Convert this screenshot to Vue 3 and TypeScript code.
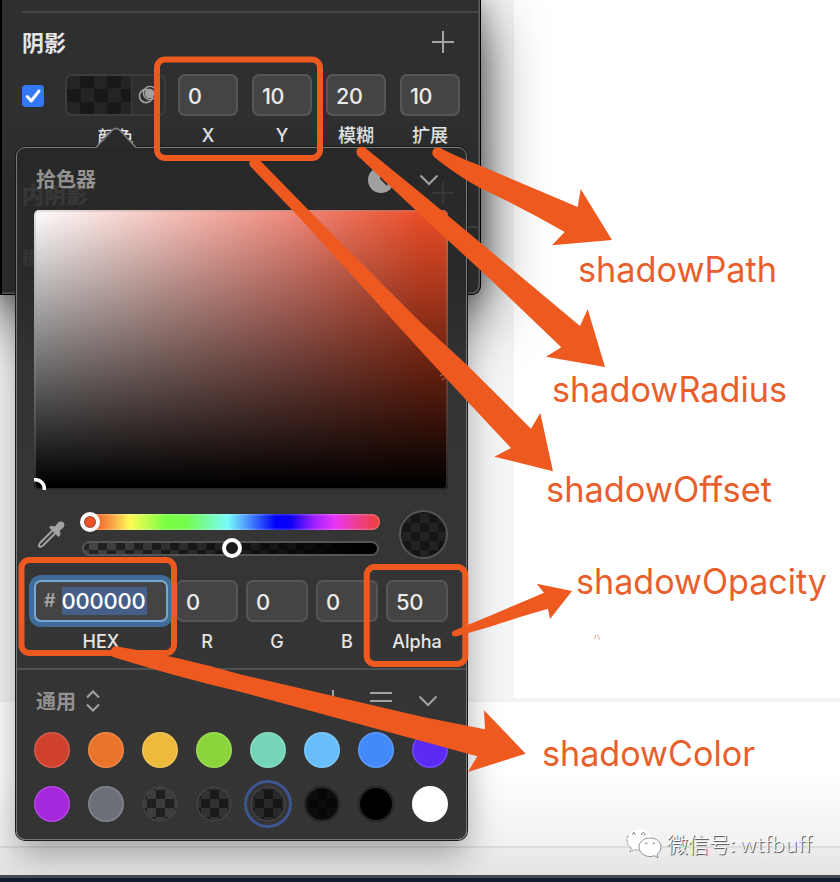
<script setup lang="ts">
interface Field { value: string; label: string }
interface Swatch { color: string; kind: 'solid' | 'checker'; selected?: boolean }
interface Note { text: string; x: number; y: number; width: number }

const shadowFields: Field[] = [
  { value: '0', label: 'X' },
  { value: '10', label: 'Y' },
  { value: '20', label: '模糊' },
  { value: '10', label: '扩展' },
]
const channels: Field[] = [
  { value: '0', label: 'R' },
  { value: '0', label: 'G' },
  { value: '0', label: 'B' },
  { value: '50', label: 'Alpha' },
]
const swatches: Swatch[] = [
  { color: '#cf412d', kind: 'solid' },
  { color: '#ea752a', kind: 'solid' },
  { color: '#edba3c', kind: 'solid' },
  { color: '#8ad53b', kind: 'solid' },
  { color: '#75d5b8', kind: 'solid' },
  { color: '#67befa', kind: 'solid' },
  { color: '#428af7', kind: 'solid' },
  { color: '#5c2bf3', kind: 'solid' },
  { color: '#a528dc', kind: 'solid' },
  { color: '#6d7079', kind: 'solid' },
  { color: 'rgba(0,0,0,.12)', kind: 'checker' },
  { color: 'rgba(0,0,0,.28)', kind: 'checker' },
  { color: 'rgba(0,0,0,.4)', kind: 'checker', selected: true },
  { color: 'rgba(0,0,0,.82)', kind: 'checker' },
  { color: '#000000', kind: 'solid' },
  { color: '#ffffff', kind: 'solid' },
]
const notes: Note[] = [
  { text: 'shadowPath', x: 578, y: 282, width: 199 },
  { text: 'shadowRadius', x: 552, y: 402, width: 235 },
  { text: 'shadowOffset', x: 546, y: 502, width: 226 },
  { text: 'shadowOpacity', x: 576, y: 594, width: 251 },
  { text: 'shadowColor', x: 542, y: 766, width: 213 },
]
const arrows: string[] = [
  'M443 149.500 Q460 158 481 166 L577.700 207 L580.700 189 L612 240 L552 245.300 L564.700 232 Q523 208 480 188 Q455 174 434 157 C429 151 436 144 443 149.500Z',
  'M366 148.500 L420 192.500 L467 231.500 L580 326 L587.700 309.300 L605 367 L546 356.700 L561.300 347.300 L490 279 Q430 224 358 156 C353 149 361 144 366 148.500Z',
  'M260.500 161 L318.300 220 L420 321.700 L467 365 L531 428.700 L540.300 413 L553 471.300 L494.300 456.700 L511 448 L467 401 L420 350 L301.700 220 L250 166 C247 160 256 155 260.500 161Z',
  'M117 646.500 Q177 656 240 674.300 L423 717 L485 729.300 L484 710.300 L525.700 753.700 L468 772 L477.300 756.300 L415 739.300 L240 691.700 Q177 677 113 657 C108 653 112 645 117 646.500Z',
  'M453 631 L490 615.700 L520 603 L544 592.700 L536.700 583.700 L572 591 L550 619 L548 608.700 L520 617 L490 626.700 L456 636.500 C451 637 451 632 453 631Z',
]
</script>

<template>
  <main class="stage">
    <div class="backdrop">
      <div class="canvas-tint"></div>
      <div class="rule"></div>
      <div class="lower"></div>
      <div class="status"></div>
      <div class="dock"></div>
    </div>

    <section class="inspector">
      <div class="hairline"></div>
      <header class="inspector-head">
        <h2>阴影</h2>
        <svg width="22" height="22" viewBox="0 0 22 22"><path d="M11 0V22M0 11H22" stroke="#a3a4a5" stroke-width="2" fill="none" /></svg>
      </header>
      <div class="shadow-row">
        <div class="check">
          <svg width="22" height="22" viewBox="0 0 22 22"><path d="M5.200 11.600 9.200 16 17 6" stroke="#fff" stroke-width="3" fill="none" stroke-linecap="round" stroke-linejoin="round" /></svg>
        </div>
        <div class="color-cell">
          <div class="color-well">
            <div class="well-checker"></div>
            <div class="blend">
              <svg width="22" height="22" viewBox="0 0 22 22"><circle cx="9" cy="12" r="6.600" fill="none" stroke="#a1a1a2" stroke-width="1.600" /><circle cx="13" cy="9" r="6.600" fill="none" stroke="#a1a1a2" stroke-width="1.400" /><circle cx="12.500" cy="9.500" r="4.800" fill="#a1a1a2" /></svg>
            </div>
          </div>
          <span>颜色</span>
        </div>
        <div class="shadow-fields">
          <label v-for="f in shadowFields" :key="f.label" class="field">
            <b>{{ f.value }}</b><span>{{ f.label }}</span>
          </label>
        </div>
      </div>
      <div class="hairline section-end"></div>
    </section>

    <section class="picker">
      <svg class="beak" width="42" height="23" viewBox="0 0 42 23"><path d="M0 22 L17.500 4 Q21 1 24.500 4 L42 22V23H0Z" fill="#2a2a2b" /><path d="M1 21.500 L17.500 4 Q21 1 24.500 4 L41 21.500" fill="none" stroke="#747576" stroke-width="1.700" /></svg>
      <div class="ghost">
        <strong>内阴影</strong>
        <svg width="22" height="22" viewBox="0 0 22 22"><path d="M11 0V22M0 11H22" stroke="#403b39" stroke-width="1.500" /></svg>
        <em>模</em>
      </div>
      <header class="picker-head">
        <h3>拾色器</h3>
        <div class="head-tools">
          <svg width="26" height="26" viewBox="0 0 26 26"><circle cx="13" cy="13" r="13" fill="#a0a0a0" /><path d="M12 7 V12 L19 19 L21 13Z" fill="#2a2a2a" /></svg>
          <svg width="20" height="12" viewBox="0 0 20 12"><path d="M1.500 1.500 10 10 18.500 1.500" stroke="#a3a3a3" stroke-width="2" fill="none" /></svg>
        </div>
      </header>
      <div class="spectrum">
        <svg width="12" height="12" viewBox="0 0 12 12"><path d="M0 1.800A9 9 0 0 1 10.200 12" stroke="#fff" stroke-width="3.600" fill="none" /></svg>
      </div>
      <div class="sliders">
        <svg width="30" height="30" viewBox="0 0 30 30"><path d="M17 10 4.500 22.500Q2.500 25 3 26Q4 28 7 25.500L19.500 13" fill="none" stroke="#a2a2a2" stroke-width="2" /><path d="M13 7.500Q15 4.500 19 6.500L22 2.500Q25 .5 27.500 2.500Q29.500 5 27.300 7.500L23.500 11Q26 14 22.500 17Z" fill="#a2a2a2" /></svg>
        <div class="tracks">
          <div class="hue"><i class="knob red"></i></div>
          <div class="alpha"><i class="knob mid"></i></div>
        </div>
        <div class="preview"></div>
      </div>
      <div class="inputs">
        <label class="field hex"><b><small>#</small><mark>000000</mark></b><span>HEX</span></label>
        <label v-for="c in channels" :key="c.label" class="field">
          <b>{{ c.value }}</b><span>{{ c.label }}</span>
        </label>
      </div>
      <div class="divider"></div>
      <div class="palette-head">
        <h3>通用</h3>
        <svg width="14" height="22" viewBox="0 0 14 22"><path d="M1 7.500 7 1.500 13 7.500M1 14.500 7 20.500 13 14.500" stroke="#a3a3a3" stroke-width="2" fill="none" /></svg>
        <div class="palette-tools">
          <svg width="22" height="22" viewBox="0 0 22 22"><path d="M11 0V22M0 11H22" stroke="#a3a3a3" stroke-width="2" /></svg>
          <svg width="22" height="22" viewBox="0 0 22 22"><path d="M0 3H22M0 11H22" stroke="#a3a3a3" stroke-width="2" /></svg>
          <svg width="20" height="12" viewBox="0 0 20 12"><path d="M1.500 1.500 10 10 18.500 1.500" stroke="#a3a3a3" stroke-width="2" fill="none" /></svg>
        </div>
      </div>
      <div class="swatches">
        <i v-for="(s, i) in swatches" :key="i" :class="['swatch', s.kind, { selected: s.selected }]" :style="{ '--tone': s.color }"></i>
      </div>
    </section>

    <svg class="annotations" width="840" height="882" viewBox="0 0 840 882">
      <g fill="none" stroke="#ee591f" stroke-width="6">
        <rect x="157" y="59.500" width="163" height="98.500" rx="8" />
        <rect x="21.500" y="560" width="152.500" height="93" rx="8" />
        <rect x="366.700" y="567" width="98.600" height="97" rx="8" />
      </g>
      <path v-for="(d, i) in arrows" :key="i" :d="d" fill="#ee591f" />
      <path d="M594.500 639 596 634.500M597.500 635 599.500 639.500M440 376 443 374M442 380 445 378" stroke="#dc8b70" stroke-width=".8" fill="none" />
      <text v-for="n in notes" :key="n.text" class="note" :x="n.x" :y="n.y" :textLength="n.width" lengthAdjust="spacingAndGlyphs">{{ n.text }}</text>
    </svg>

    <footer class="watermark">
      <svg width="36" height="32" viewBox="0 0 36 32">
        <path d="M14 1.500C6.500 1.500 1 6 1 12C1 15.500 2.500 18 5.500 20L4 24L8.800 21.500Q11 22.300 14 22C21 22 26 17 26 12C26 6 21 1.500 14 1.500Z" fill="#fff" />
        <path d="M2.500 7.500Q1 9.500 1 12C1 15.500 2.500 18 5.500 20L4 24L8.800 21.500Q11 22.300 14 22" fill="none" stroke="#777" stroke-width=".8" stroke-dasharray="3 1" />
        <path d="M24 10C17.500 10 13 14 13 19C13 24.500 18 28.500 24 28.500Q26.500 28.500 28.500 27.700L32 30L31 26.300C33.500 24.500 35 22 35 19C35 14 30.500 10 24 10Z" fill="#fff" stroke="#777" stroke-width=".8" />
        <path d="M6.500 6.500A1.300 1.300 0 1 1 8.500 7M16 7A1.500 1.500 0 1 1 18 7.500M19 16Q20.200 13.500 21.500 16M26.500 16Q27.800 13.500 29 16" fill="none" stroke="#666" stroke-width=".9" />
      </svg>
      <span>微信号: <em>wtfbuff</em></span>
    </footer>
  </main>
</template>

<style>
body { background: #fff; overflow: hidden; }
</style>

<style scoped>
* { box-sizing: border-box; }
.stage { position: relative; width: 840px; height: 882px; overflow: hidden; background: #fff; font-family: Inter, "Noto Sans CJK SC", sans-serif; }
svg { display: block; flex: none; }
h2, h3 { margin: 0; font-family: "Noto Sans CJK SC", sans-serif; }
.backdrop { height: 882px; display: flex; flex-direction: column; }
.canvas-tint { width: 514px; height: 698px; background: #f4f5f7; }
.rule { height: 4px; background: #f3f3f4; }
.lower { height: 144px; background: linear-gradient(#fff 0, #fff 48%, #f1f1f1 100%); }
.status { height: 31px; border-top: 2px solid #dcdcdc; background: linear-gradient(#ededed, #e5e4e4); }
.dock { flex: 1; border-top: 3px solid #454b55; background: #131c2f; }
.lower { height: 144px; }
.status { height: 29px; }

.inspector { position: absolute; left: 0; top: 0; width: 481px; height: 295px; padding: 11px 0 0 20px; display: flex; flex-direction: column; color: #e5e5e5; background: #2e2f31; border: solid #000; border-width: 0 1px 1px 2px; border-radius: 0 0 9px 0; box-shadow: inset -1.500px -1.500px 0 #606163, 0 22px 62px rgba(0,0,0,.72), 0 0 26px rgba(0,0,0,.3); }
.hairline { height: 2px; background: #454648; margin-right: 1px; flex: none; }
.section-end { margin-top: auto; margin-bottom: 66px; }
.inspector-head { height: 58px; display: flex; align-items: center; justify-content: space-between; padding-right: 26px; }
.inspector-head h2 { font-size: 22px; line-height: 30px; font-weight: 700; padding-bottom: 3px; }
.shadow-row { display: flex; align-items: flex-start; padding-top: 3px; }
.check { width: 22px; height: 22px; margin-top: 11px; border-radius: 4px; background: #3478f6; }
.color-cell { width: 101px; margin-left: 21px; display: flex; flex-direction: column; align-items: center; font: 500 18px/40px "Noto Sans CJK SC", sans-serif; }
.color-well { width: 101px; height: 42px; display: flex; overflow: hidden; border: 2px solid #3b3c3e; border-radius: 7px; }
.well-checker { width: 66px; background: conic-gradient(#17181a 25%, #232426 0 50%, #17181a 0 75%, #232426 0) 0 -1px / 27px 27px; border-right: 1px solid #3b3c3e; }
.blend { padding: 8px 5px; }
.shadow-fields { display: flex; gap: 14px; margin-left: 12px; }
.field { display: flex; flex-direction: column; align-items: center; width: 60px; font-weight: 500; font-size: 18px; line-height: 40px; }
.field b { width: 100%; height: 42px; padding-left: 8px; border: 2px solid #565657; border-radius: 7px; background: #444; color: #ebebeb; font-size: 21.500px; font-weight: 500; line-height: 40px; letter-spacing: -.3px; }
.field span { height: 40px; }

.picker { position: absolute; left: 16px; top: 147px; width: 451px; height: 693px; padding: 1px 18px 0 17px; border: 1px solid #777879; border-radius: 9px; background: linear-gradient(#282828 0, #2a2a2a 138px, #333 220px, #353535 320px, #343434 100%); color: #e5e5e5; box-shadow: 0 0 0 1px #1a1a1a, 0 14px 34px rgba(0,0,0,.34); }
.beak { position: absolute; left: 78px; top: -22px; }
.ghost { position: absolute; left: 5px; top: 30px; right: 12px; display: grid; grid-template-columns: 1fr 22px; align-items: center; color: #373737; font: 700 22px/30px "Noto Sans CJK SC", sans-serif; }
.ghost em { margin-top: 34px; font-style: normal; font-size: 18px; font-weight: 500; }
.picker-head { position: relative; height: 61px; display: flex; justify-content: space-between; align-items: center; padding-left: 2px; }
.picker-head h3, .palette-head h3 { font-size: 20px; line-height: 28px; font-weight: 700; color: #929292; }
.picker-head h3 { padding-bottom: 2px; }
.head-tools { display: flex; align-items: center; gap: 25px; padding-right: 9px; }
.spectrum { position: relative; height: 280px; overflow: hidden; display: flex; align-items: flex-end; border-radius: 5px; background: linear-gradient(to bottom, transparent, #000 98%), linear-gradient(to right, #fff, #f08a7c 62%, #ec4d27 94%); box-shadow: inset 0 0 0 2px rgba(150,150,150,.27); }
.sliders { height: 90px; display: flex; align-items: flex-start; }
.sliders > svg { margin: 30px 0 0 2px; }
.tracks { width: 298px; margin: 24px 0 0 16px; display: flex; flex-direction: column; gap: 11px; }
.hue { width: 298px; height: 16px; border-radius: 8px; background: linear-gradient(to right, #ee5025 3%, #f5a144 10%, #fffa55 16%, #78ff43 28%, #76fb4c 35%, #77fbfd 49%, #66cbfa 52%, #0000fb 65%, #0c00f5 70%, #a020ff 78%, #e935f5 85%, #eb3da0 91%, #ee4036 100%); box-shadow: inset 0 0 0 1.500px rgba(255,255,255,.18); }
.alpha { width: 297px; height: 15px; padding-left: 142px; border: 2px solid #555; border-radius: 8px; background: linear-gradient(to right, transparent, #000 93%), conic-gradient(#242424 25%, #454545 0 50%, #242424 0 75%, #454545 0) 5px 0 / 18px 14px; }
.knob { display: block; width: 20px; height: 20px; border: 4px solid #fff; border-radius: 50%; }
.red { margin: 0 0 0 -2px; transform: translateY(-2px); background: #ee5127; box-shadow: inset 0 0 0 1px #8b4534; }
.mid { margin: 0 0 0 -4px; transform: translateY(-5px); background: #1c1c1c; }
.preview { width: 49px; height: 49px; margin: 20px 0 0 19px; border: 2px solid #555; border-radius: 50%; background: conic-gradient(#151515 25%, #222 0 50%, #151515 0 75%, #222 0) 1px 2px / 18px 18px; }
.inputs { display: flex; gap: 8px; height: 88px; }
.inputs .field { width: 62px; }
.inputs .field b { font-size: 22px; }
.inputs .hex { width: 134px; }
.inputs .hex b { display: flex; align-items: center; gap: 6px; padding: 0 0 0 8px; border-color: #78a8d3; box-shadow: 0 0 0 5px #416c99; letter-spacing: 0; }
.hex small { font-size: 18px; font-weight: 600; color: #a3a3a3; }
.hex mark { width: 85px; height: 28px; line-height: 29px; background: #465f88; color: #fff; letter-spacing: -.2px; white-space: nowrap; }
.divider { height: 2px; margin: 0 -18px 0 -17px; background: #505151; }
.palette-head { height: 62px; display: flex; align-items: center; gap: 10px; padding: 0 10px 0 2px; }
.palette-tools { margin-left: auto; display: flex; align-items: center; gap: 26px; }
.swatches { display: grid; grid-template-columns: repeat(8, 36px); grid-auto-rows: 36px; gap: 18px; }
.swatch { border-radius: 50%; background: var(--tone); box-shadow: inset 0 0 0 1.500px rgba(255,255,255,.15); }
.swatch.checker { background: linear-gradient(var(--tone), var(--tone)), conic-gradient(#222325 25%, #444547 0 50%, #222325 0 75%, #444547 0) 5px 4px / 18px 18px; box-shadow: inset 0 0 0 2px #414142; }
.swatch:nth-child(14), .swatch:nth-child(15) { box-shadow: inset 0 0 0 2px #292929; }
.swatch.selected { outline: 3px solid #3d558e; outline-offset: 3px; }
.annotations { position: absolute; inset: 0; }
.note { font: 400 35px Inter, sans-serif; fill: #e85f2c; }
.watermark { position: absolute; left: 626px; top: 827px; display: flex; align-items: center; gap: 5px; white-space: nowrap; color: #fff; font: 300 21px/32px "Noto Sans CJK SC", sans-serif; text-shadow: 1px 1px 0 #666, .5px .5px 1px #888; }
.watermark span { padding-bottom: 1px; }
.watermark em { font-style: normal; letter-spacing: .7px; }
</style>
